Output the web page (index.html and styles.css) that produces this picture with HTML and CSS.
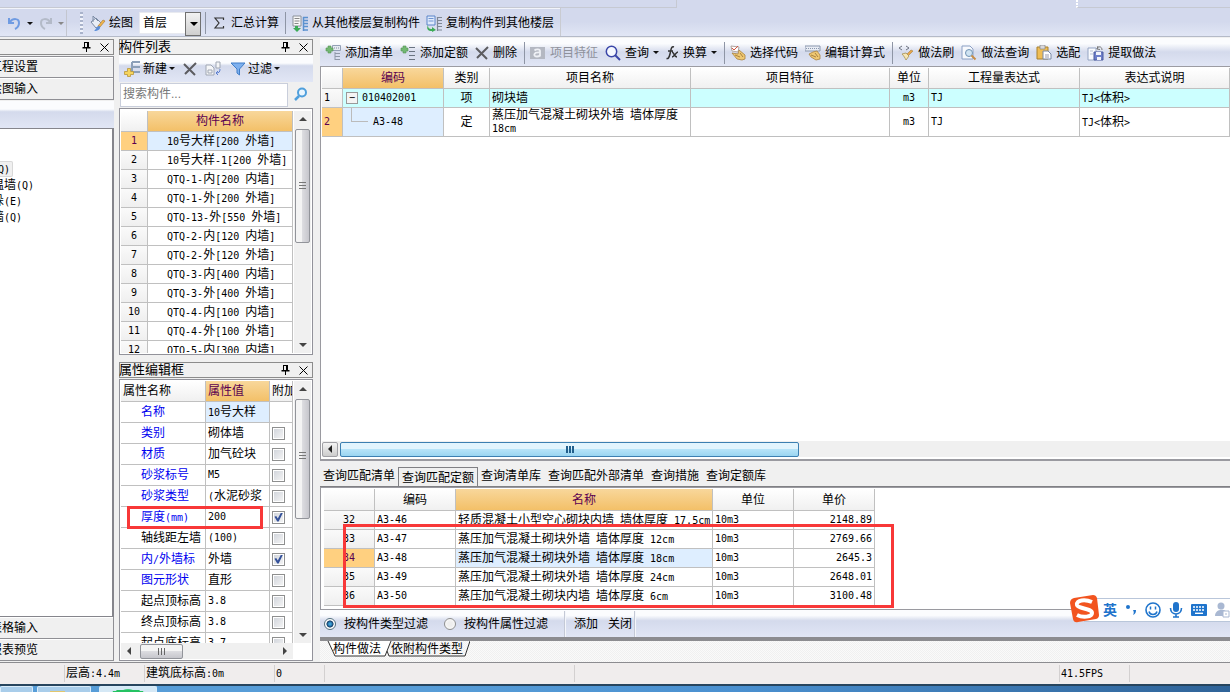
FILE: index.html
```html
<!DOCTYPE html>
<html lang="zh-CN">
<head>
<meta charset="utf-8">
<title>构件做法</title>
<link rel="stylesheet" href="styles.css">
</head>
<body>
<svg class="defs" aria-hidden="true">
  <symbol id="pin" viewBox="0 0 9 10"><path d="M2 0h5v5h1.500v1.500H5V10H4V6.500H.5V5H2zM3 1v4h2V1z" fill="#000" fill-rule="evenodd"/></symbol>
  <symbol id="close" viewBox="0 0 9 9"><path d="M.5.5l8 8M8.500.5l-8 8" stroke="#000" fill="none"/></symbol>
  <symbol id="cross" viewBox="0 0 14 14"><path d="M1 2l11 11M13 1L2 12" stroke="#5c5c60" stroke-width="2" fill="none"/></symbol>
  <symbol id="plusdoc" viewBox="0 0 16 16"><path d="M9 2.500h6M9 6.500h6M9 10.500h6M9 14.500h6" stroke="#6a7482" stroke-width="1.200"/><path d="M3 1h3v2h2v3H6v2H3V6H1V3h2z" fill="#72b872" stroke="#559455" stroke-width=".6"/></symbol>
  <symbol id="plusgrid" viewBox="0 0 16 16"><path d="M7.500.5h8v5h-8z" fill="#e6ebf2" stroke="#93a0b6"/><path d="M9 3h6" stroke="#8390a6" stroke-dasharray="1 1"/><path d="M10 7v8M10 8.500h5M10 11.500h5M10 14.500h5" stroke="#8f98a8" fill="none"/><path d="M3 1h3v2h2v3H6v2H3V6H1V3h2z" fill="#72b872" stroke="#559455" stroke-width=".6"/></symbol>
  <symbol id="copyfloor" viewBox="0 0 17 17"><path d="M1 1h8v10H1z" fill="#f8f8f8" stroke="#8b9098"/><path d="M2.500 3.500h5M2.500 6h5M2.500 8.500h4" stroke="#888"/><path d="M11.500 2v14M11 2.500h5M11 5.500h5M11 8.500h5M11 11.500h5M11 15h5" stroke="#5b91cf" stroke-width="1.500"/><path d="M3 11h3v2h3l-4 4-4-4h2z" fill="#3cab57"/></symbol>
  <symbol id="pastefloor" viewBox="0 0 17 17"><path d="M1 1h8v9H1z" fill="#dfeafc" stroke="#5b84c8"/><path d="M2.500 3.500h5M2.500 6h5" stroke="#6f94d2"/><path d="M11.500 2v14M11 2.500h5M11 5.500h5M11 8.500h5M11 11.500h5M11 15h5" stroke="#7e8794" stroke-width="1.200"/><path d="M2 10c0 3 1 4 4 4v-2l4 3-4 2v-1c-4 0-6-2-4-6z" fill="#3cab57"/></symbol>
</svg>
<div class="app">
  <header class="top">
    <div class="top-sliver"><span class="sliver-a"></span><span class="sliver-b"></span></div>
    <div class="main-tools">
      <div class="undo-group">
        <button class="tool" aria-label="撤销"><svg width="16" height="16" viewBox="0 0 16 16"><path d="M2 3v5h5M3 7c3-4 9-4 9 1 0 3-2 5-4 6" fill="none" stroke="#6f9be2" stroke-width="2"/></svg></button><i class="drop"></i>
        <button class="tool" aria-label="恢复"><svg width="16" height="16" viewBox="0 0 16 16"><path d="M13 3v5H8M12 7C9 3 3 3 3 8c0 3 2 5 4 6" fill="none" stroke="#b3bac8" stroke-width="2"/></svg></button><i class="drop dim"></i>
      </div>
      <i class="grip"></i>
      <button class="tool draw"><svg width="16" height="17" viewBox="0 0 16 17"><path d="M1 7l5-4 6 6-6 4z" fill="#e9eef6" stroke="#7c8ca5"/><path d="M3 1v6M3 1l5 5" stroke="#7c8ca5" fill="none"/><path d="M15 6l-5 6-2-1 5-6z" fill="#f2b64a" stroke="#b0803b" stroke-width=".7"/><path d="M10 11c1 3-2 5-6 5 2-1 2-5 6-5z" fill="#5b8ed8"/></svg>绘图</button>
      <span class="combo"><select aria-label="楼层"><option>首层</option></select></span>
      <i class="sep"></i>
      <button class="tool sum"><svg width="16" height="16" viewBox="0 0 16 16"><path d="M12.500 5V3H4l4 5-4 5h8.500v-2" fill="none" stroke="#333" stroke-width="1.200"/></svg>汇总计算</button>
      <i class="sep"></i>
      <button class="tool copy"><svg width="17" height="17"><use href="#copyfloor"/></svg>从其他楼层复制构件</button>
      <button class="tool copy"><svg width="17" height="17"><use href="#pastefloor"/></svg>复制构件到其他楼层</button>
    </div>
  </header>

  <main class="work">
    <aside class="nav">
      <div class="titlebar"><span></span><svg width="9" height="10"><use href="#pin"/></svg><svg width="9" height="9"><use href="#close"/></svg></div>
      <button class="fold first">工程设置</button>
      <button class="fold">绘图输入</button>
      <div class="nav-tools"></div>
      <ul class="tree">
        <li class="chosen">墙<span class="n">(Q)</span></li>
        <li>保温墙<span class="n">(Q)</span></li>
        <li>墙垛<span class="n">(E)</span></li>
        <li>幕墙<span class="n">(Q)</span></li>
      </ul>
      <button class="fold">表格输入</button>
      <button class="fold">报表预览</button>
    </aside>

    <section class="middle">
      <div class="titlebar"><span>构件列表</span><svg width="9" height="10"><use href="#pin"/></svg><svg width="9" height="9"><use href="#close"/></svg></div>
      <div class="list-tools">
        <button class="tool"><svg width="17" height="17" viewBox="0 0 17 17"><path d="M8 2h8M8 7h8M8 12h8M8 2v10" stroke="#8da0b8" stroke-width="2" fill="none"/><path d="M3.500 8.500h3v3h3v3h-3v2h-3v-2h-3v-3h3z" fill="#f6d45c" stroke="#b8953a" stroke-width=".8"/></svg>新建<i class="drop"></i></button>
        <button class="tool" aria-label="删除"><svg width="14" height="14"><use href="#cross"/></svg></button>
        <button class="tool" aria-label="复制"><svg width="17" height="16" viewBox="0 0 17 16"><path d="M1 4h5l3 3v7H1zM11 1h4v6h-4z" fill="#f5f6f8" stroke="#a0a7b3"/><path d="M3 9h4v3H3z" fill="none" stroke="#a0a7b3"/><path d="M15 8c0 3-1 4-4 4M13 10l-2 2 2 2" fill="none" stroke="#5c7fd0"/></svg></button>
        <button class="tool"><svg width="16" height="16" viewBox="0 0 16 16"><path d="M1 2h14l-5.500 6v6L7 12V8z" fill="#7eb0ee" stroke="#3f7dc8"/></svg>过滤<i class="drop"></i></button>
      </div>
      <div class="search">
        <input type="text" placeholder="搜索构件..." aria-label="搜索构件">
        <button class="tool" aria-label="搜索"><svg width="14" height="14" viewBox="0 0 14 14"><circle cx="8" cy="5.500" r="4" fill="#eaf6ff" stroke="#4f9fdc" stroke-width="2"/><path d="M5 9l-4 4" stroke="#4f9fdc" stroke-width="2.500"/></svg></button>
      </div>
      <div class="frame list-frame">
        <div class="clip">
          <table class="grid list">
            <colgroup><col class="w27"><col></colgroup>
            <thead><tr><th></th><th class="hot">构件名称</th></tr></thead>
            <tbody>
              <tr class="on"><th class="n">1</th><td><span class="n">10</span>号大样<span class="n">[200 </span>外墙<span class="n">]</span></td></tr>
              <tr><th class="n">2</th><td><span class="n">10</span>号大样<span class="n">-1[200 </span>外墙<span class="n">]</span></td></tr>
              <tr><th class="n">3</th><td><span class="n">QTQ-1-</span>内<span class="n">[200 </span>内墙<span class="n">]</span></td></tr>
              <tr><th class="n">4</th><td><span class="n">QTQ-1-</span>外<span class="n">[200 </span>外墙<span class="n">]</span></td></tr>
              <tr><th class="n">5</th><td><span class="n">QTQ-13-</span>外<span class="n">[550 </span>外墙<span class="n">]</span></td></tr>
              <tr><th class="n">6</th><td><span class="n">QTQ-2-</span>内<span class="n">[120 </span>内墙<span class="n">]</span></td></tr>
              <tr><th class="n">7</th><td><span class="n">QTQ-2-</span>外<span class="n">[120 </span>外墙<span class="n">]</span></td></tr>
              <tr><th class="n">8</th><td><span class="n">QTQ-3-</span>内<span class="n">[400 </span>内墙<span class="n">]</span></td></tr>
              <tr><th class="n">9</th><td><span class="n">QTQ-3-</span>外<span class="n">[400 </span>外墙<span class="n">]</span></td></tr>
              <tr><th class="n">10</th><td><span class="n">QTQ-4-</span>内<span class="n">[100 </span>内墙<span class="n">]</span></td></tr>
              <tr><th class="n">11</th><td><span class="n">QTQ-4-</span>外<span class="n">[100 </span>外墙<span class="n">]</span></td></tr>
              <tr><th class="n">12</th><td><span class="n">QTQ-5-</span>内<span class="n">[300 </span>内墙<span class="n">]</span></td></tr>
            </tbody>
          </table>
        </div>
        <div class="vbar"><i class="up"></i><b class="thumb tall"></b><i class="down"></i></div>
      </div>

      <div class="titlebar second"><span>属性编辑框</span><svg width="9" height="10"><use href="#pin"/></svg><svg width="9" height="9"><use href="#close"/></svg></div>
      <div class="frame prop-frame">
        <div class="clip">
          <table class="grid props">
            <colgroup><col><col class="w64"><col class="w23"></colgroup>
            <thead><tr><th>属性名称</th><th class="hot">属性值</th><th>附加</th></tr></thead>
            <tbody>
              <tr class="on"><td class="key">名称</td><td><span class="n">10</span>号大样</td><td></td></tr>
              <tr><td class="key">类别</td><td>砌体墙</td><td><input type="checkbox" aria-label="类别附加"></td></tr>
              <tr><td class="key">材质</td><td>加气砼块</td><td><input type="checkbox" aria-label="材质附加"></td></tr>
              <tr><td class="key">砂浆标号</td><td class="n">M5</td><td><input type="checkbox" aria-label="砂浆标号附加"></td></tr>
              <tr><td class="key">砂浆类型</td><td><span class="n">(</span>水泥砂浆</td><td><input type="checkbox" aria-label="砂浆类型附加"></td></tr>
              <tr><td class="key">厚度<span class="n">(mm)</span></td><td class="n">200</td><td><input type="checkbox" checked aria-label="厚度附加"></td></tr>
              <tr><td class="key plain">轴线距左墙</td><td class="n">(100)</td><td><input type="checkbox" aria-label="轴线距附加"></td></tr>
              <tr><td class="key">内<span class="n">/</span>外墙标</td><td>外墙</td><td><input type="checkbox" checked aria-label="内外墙附加"></td></tr>
              <tr><td class="key">图元形状</td><td>直形</td><td><input type="checkbox" aria-label="图元形状附加"></td></tr>
              <tr><td class="key plain">起点顶标高</td><td class="n">3.8</td><td><input type="checkbox" aria-label="起点顶标高附加"></td></tr>
              <tr><td class="key plain">终点顶标高</td><td class="n">3.8</td><td><input type="checkbox" aria-label="终点顶标高附加"></td></tr>
              <tr><td class="key plain">起点底标高</td><td class="n">3.7</td><td><input type="checkbox" aria-label="起点底标高附加"></td></tr>
            </tbody>
          </table>
        </div>
        <div class="vbar"><i class="up"></i><b class="thumb tall"></b><i class="down"></i></div>
        <div class="hbar"><i class="left"></i><b class="thumb wide"></b><i class="right-end"></i></div>
        <div class="mark mark-thickness"></div>
      </div>
    </section>

    <section class="right">
      <div class="def-tools">
        <button class="tool"><svg width="16" height="16"><use href="#plusgrid"/></svg>添加清单</button>
        <button class="tool"><svg width="16" height="16"><use href="#plusdoc"/></svg>添加定额</button>
        <button class="tool"><svg width="14" height="14"><use href="#cross"/></svg>删除</button>
        <i class="sep"></i>
        <button class="tool off"><svg width="16" height="14" viewBox="0 0 16 14"><path d="M0 1h15v12H0z" fill="#b4b8c2"/><path d="M4.500 4.500C6 3 10 3 10 5v5.500M10 6.500c-7-.5-7 4-3 4 2 0 3-1 3-2" fill="none" stroke="#eef0f5" stroke-width="1.800"/></svg>项目特征</button>
        <button class="tool"><svg width="16" height="16" viewBox="0 0 16 16"><circle cx="6.500" cy="6.500" r="5.200" fill="#f5f8ff" stroke="#3a46a8" stroke-width="1.500"/><path d="M10 10l5 5" stroke="#3a46a8" stroke-width="2"/></svg>查询<i class="drop"></i></button>
        <button class="tool"><svg width="13" height="14" viewBox="0 0 13 14"><path d="M8 1C5 0 5 4 4 8s-2 5-3.500 4.500M2 5h5M6 6c2 0 2 5 5 5M12 6c-2 0-4 5-6 5" fill="none" stroke="#333" stroke-width="1.500"/></svg>换算<i class="drop"></i></button>
        <i class="sep"></i>
        <button class="tool"><svg width="16" height="16" viewBox="0 0 16 16"><path d="M1 1l8 1-1 5-6-1z" fill="#fff" stroke="#b3a6a0"/><path d="M2 3l2 2 4-4" stroke="#d45644" fill="none"/><path d="M2 8l6 1 1-4 6 5v4l-3 1-5-1z" fill="#efc873" stroke="#a9823f" stroke-width=".8"/><path d="M5 10l5 2M10 8l3 4" stroke="#a9823f"/></svg>选择代码</button>
        <button class="tool"><svg width="16" height="16" viewBox="0 0 16 16"><path d="M0 1h15v5H0z" fill="#e8ecf4" stroke="#8996ad"/><path d="M1 3.500h13" stroke="#8996ad" stroke-dasharray="1 1"/><path d="M4 9l4-2 4-1 3 4v4l-4 1-5-3z" fill="#efc873" stroke="#a9823f" stroke-width=".8"/><path d="M6 10l5 2M10 8l3 4" stroke="#a9823f"/></svg>编辑计算式</button>
        <i class="sep"></i>
        <button class="tool"><svg width="16" height="16" viewBox="0 0 16 16"><path d="M4 1L1 3l3 2M8 1l3 2-3 2" fill="none" stroke="#6d7380"/><path d="M15 6l-5 5-2-1 5-5z" fill="#e8a54a" stroke="#a9823f" stroke-width=".6"/><path d="M4 9l4-1 3 3-3 4c-1-2-2-4-4-6z" fill="#f6e6b4" stroke="#a39053" stroke-width=".8"/></svg>做法刷</button>
        <button class="tool"><svg width="16" height="16" viewBox="0 0 16 16"><path d="M1 1h8l3 3v10H1z" fill="#f7f9fd" stroke="#8ba0c4"/><circle cx="8" cy="8" r="3.500" fill="#cfe3f2" stroke="#7193b4"/><path d="M10.500 10.500l4 4" stroke="#c78d48" stroke-width="2"/></svg>做法查询</button>
        <button class="tool"><svg width="16" height="16" viewBox="0 0 16 16"><path d="M1 2h11v12H1z" fill="#efbd55" stroke="#a8802c"/><path d="M4 0h5v4H4z" fill="#d8d8dc" stroke="#888" stroke-width=".7"/><path d="M7 6h5l3 3v5H7z" fill="#fff" stroke="#7888a4"/><path d="M9 10h4M9 12h4" stroke="#99a"/></svg>选配</button>
        <button class="tool"><svg width="17" height="16" viewBox="0 0 17 16"><path d="M1 3h8v12H1z" fill="#f8fafe" stroke="#94a4c2"/><path d="M3 6h3M3 9h3" stroke="#b8c2d5"/><path d="M7 7h9v8H7z" fill="#6d7fca" stroke="#4a5aa0"/><path d="M9 7h5v3H9zM10 12h4v3h-4z" fill="#f2f4fb"/><path d="M10 4c1-3 5-3 5 1M11 1l-1 3 3 .5" fill="none" stroke="#777"/></svg>提取做法</button>
      </div>
      <div class="def-area">
        <div class="def-sheet">
          <table class="grid defs-table">
            <colgroup><col class="w21"><col class="w101"><col class="w46"><col class="w201"><col class="w199"><col class="w39"><col class="w151"><col></colgroup>
            <thead><tr><th></th><th class="hot">编码</th><th>类别</th><th>项目名称</th><th>项目特征</th><th>单位</th><th>工程量表达式</th><th>表达式说明</th></tr></thead>
            <tbody>
              <tr class="item"><th class="n">1</th><td class="n code"><button class="toggle" aria-label="折叠">−</button>010402001</td><td class="mid">项</td><td>砌块墙</td><td></td><td class="n mid">m3</td><td class="n">TJ</td><td><span class="n">TJ&lt;</span>体积<span class="n">&gt;</span></td></tr>
              <tr class="sub on"><th class="n">2</th><td class="n child"><i class="branch"></i>A3-48</td><td class="mid">定</td><td class="wrap">蒸压加气混凝土砌块外墙<span class="n"> </span>墙体厚度<br><span class="n">18cm</span></td><td></td><td class="n mid">m3</td><td class="n">TJ</td><td><span class="n">TJ&lt;</span>体积<span class="n">&gt;</span></td></tr>
            </tbody>
          </table>
        </div>
        <div class="hbar blue"><i class="left"></i><b class="thumb"></b></div>
      </div>

      <nav class="tabs">
        <button>查询匹配清单</button><button class="active">查询匹配定额</button><button>查询清单库</button><button>查询匹配外部清单</button><button>查询措施</button><button>查询定额库</button>
      </nav>
      <div class="query-area">
        <table class="grid query">
          <colgroup><col class="w51"><col class="w81"><col class="w257"><col class="w81"><col class="w81"></colgroup>
          <thead><tr><th></th><th>编码</th><th class="hot">名称</th><th>单位</th><th>单价</th></tr></thead>
          <tbody>
            <tr><th class="n">32</th><td class="n">A3-46</td><td>轻质混凝土小型空心砌块内墙<span class="n"> </span>墙体厚度<span class="n"> 17.5cm</span></td><td class="n">10m3</td><td class="n num">2148.89</td></tr>
            <tr><th class="n">33</th><td class="n">A3-47</td><td>蒸压加气混凝土砌块外墙<span class="n"> </span>墙体厚度<span class="n"> 12cm</span></td><td class="n">10m3</td><td class="n num">2769.66</td></tr>
            <tr class="on"><th class="n">34</th><td class="n">A3-48</td><td class="cur">蒸压加气混凝土砌块外墙<span class="n"> </span>墙体厚度<span class="n"> 18cm</span></td><td class="n">10m3</td><td class="n num">2645.3</td></tr>
            <tr><th class="n">35</th><td class="n">A3-49</td><td>蒸压加气混凝土砌块外墙<span class="n"> </span>墙体厚度<span class="n"> 24cm</span></td><td class="n">10m3</td><td class="n num">2648.01</td></tr>
            <tr><th class="n">36</th><td class="n">A3-50</td><td>蒸压加气混凝土砌块内墙<span class="n"> </span>墙体厚度<span class="n"> 6cm</span></td><td class="n">10m3</td><td class="n num">3100.48</td></tr>
          </tbody>
        </table>
        <div class="mark mark-rows"></div>
      </div>
      <div class="filter-bar">
        <label><input type="radio" name="filter" checked>按构件类型过滤</label>
        <label><input type="radio" name="filter">按构件属性过滤</label>
        <i class="edge"></i>
        <button class="tool">添加</button><button class="tool">关闭</button>
        <i class="edge"></i>
      </div>
      <div class="sheet-tabs">
        <svg class="tab-lines" width="150" height="18" viewBox="0 0 150 18"><path d="M9 0l6 15h50l6-15z" fill="#fff"/><path d="M8 0l7 15h50l6-15M67 10l2 5h76l5-15" fill="none" stroke="#333"/></svg>
        <button>构件做法</button><button>依附构件类型</button>
      </div>
    </section>
  </main>

  <footer class="status">
    <span class="s1"></span><span class="s2">层高<span class="n">:4.4m</span></span><span class="s3">建筑底标高<span class="n">:0m</span></span><span class="s4 n">0</span><span class="s5"></span><span class="s6"></span><span class="s7 n">41.5FPS</span><span></span>
  </footer>
  <div class="taskbar"><i class="t1"></i><i class="t2"></i><i class="t3"></i></div>

  <div class="ime">
    <svg class="sogou" width="30" height="30" viewBox="0 0 30 30"><path d="M5 4L24 1q3 0 4 3l2 17q0 3-3 4L9 28q-4 1-5-3L1 9Q1 5 5 4z" fill="#f2541f"/><path d="M23 8C16 5 7 6 8 11c1 4 15 3 15 8 0 4-9 5-15 2" fill="none" stroke="#fff" stroke-width="4"/></svg>
    <button class="lang">英</button>
    <svg width="12" height="12" viewBox="0 0 12 12"><circle cx="3" cy="3" r="2" fill="#1f74cc"/><path d="M8 6h3c0 3-1 4-3 5 1-2 1-3 0-5z" fill="#1f74cc"/></svg>
    <svg width="16" height="16" viewBox="0 0 16 16"><circle cx="8" cy="8" r="7" fill="none" stroke="#1f74cc" stroke-width="1.600"/><path d="M5.500 4.500v3M10.500 4.500v3M4 9.500c1 4 7 4 8 0" fill="none" stroke="#1f74cc" stroke-width="1.500"/></svg>
    <svg width="14" height="16" viewBox="0 0 14 16"><rect x="4" y="0" width="6" height="10" rx="3" fill="#1f74cc"/><path d="M1.500 6c0 8 11 8 11 0M7 12v3M4 15h6" fill="none" stroke="#1f74cc" stroke-width="1.600"/></svg>
    <svg width="16" height="12" viewBox="0 0 16 12"><rect width="16" height="12" rx="1" fill="#1f74cc"/><path d="M2 3h12M2 6h12" stroke="#fff" stroke-width="1.400" stroke-dasharray="2 1"/><path d="M4 9.300h8" stroke="#fff" stroke-width="1.400"/></svg>
    <svg width="15" height="16" viewBox="0 0 15 16"><circle cx="6" cy="4" r="3.500" fill="#a9b8d2"/><path d="M0 14c0-8 12-8 12-2v2z" fill="#a9b8d2"/><path d="M8 9h6v6H8z" fill="#fff" stroke="#a9b8d2"/><path d="M10 12h2" stroke="#a9b8d2"/></svg>
  </div>
</div>
</body>
</html>
```
FILE: styles.css
```css
* { box-sizing: border-box; }
body {
  margin: 0;
  background: #f0f0f0;
  color: #000;
  font: 12px/16px "Liberation Sans", "Noto Sans CJK SC", sans-serif;
}
button, input, select { font: inherit; color: inherit; }
button { border: 0; background: none; padding: 0; white-space: nowrap; }
svg { flex: none; }
.defs { position: absolute; width: 0; height: 0; }
.n { font-family: "DejaVu Sans Mono", monospace; font-size: 10px; white-space: pre; }
.app { position: relative; display: flex; flex-direction: column; height: 100vh; overflow: hidden; }

/* Top toolbars */
.top { height: 37px; background: linear-gradient(#d3d9ed 60%, #e1e6f5); border-bottom: 1px solid #b4bac8; }
.top-sliver { display: flex; justify-content: space-between; height: 8px; }
.sliver-a { width: 677px; height: 8px; border: solid #c6c9d2; border-width: 0 1px 1px 0; }
.sliver-b { width: 154px; height: 8px; border: solid #c6c9d2; border-width: 0 0 1px; border-left: 2px dotted #fff; }
.main-tools {
  display: flex; align-items: center; width: 561px; height: 28px; padding-top: 2px;
  border-right: 1px solid #c9cbd1; box-shadow: inset 0 1px #f2f4fa;
}
.undo-group { display: flex; align-items: center; gap: 5px; width: 67px; height: 26px; padding-left: 7px; border-right: 1px solid #c3c6cf; }
.undo-group .drop { margin-left: 0; }
.undo-group .tool { margin-right: -1px; }
.grip { width: 3px; height: 22px; margin: 0 7px 0 13px; background: repeating-linear-gradient(#a9b3cb 0 2px, #f0f3fb 2px 4px); }
.tool { display: flex; align-items: center; gap: 4px; flex: none; height: 22px; }
.drop { flex: none; border: 3px solid transparent; border-top-color: #111; border-bottom: 0; }
.drop.dim { border-top-color: #888; }
.sep { flex: none; width: 1px; height: 22px; background: #8e95a5; }
.draw { width: 49px; gap: 3px; }
.combo { position: relative; flex: none; width: 62px; height: 22px; margin-right: 4px; }
.combo select { appearance: none; width: 100%; height: 100%; padding: 0 3px; border: 1px solid #e8eaf0; border-radius: 0; background: #fff; }
.combo::before { content: ""; position: absolute; right: 0; top: 0; width: 14px; height: 22px; border: 1px solid #707070; background: linear-gradient(#f2f2f2, #cfcfcf); pointer-events: none; }
.combo::after { content: ""; position: absolute; right: 3px; top: 10px; border: 4px solid transparent; border-top-color: #000; border-bottom: 0; pointer-events: none; }
.sum { margin: 0 6px 0 5px; }
.copy { margin-left: 6px; gap: 3px; }

/* Columns */
.work { flex: 1; min-height: 0; display: grid; grid-template-columns: 114px 194px 1fr; column-gap: 5px; }
.nav, .middle, .right { display: flex; flex-direction: column; min-height: 0; min-width: 0; }
.nav, .middle { padding-top: 2px; padding-bottom: 1px; }
.right { padding-top: 1px; margin-left: 2px; }

.titlebar { flex: none; display: flex; align-items: center; gap: 9px; height: 16px; padding-right: 4px; border: 1px solid #8c8c8c; line-height: 14px; }
.titlebar span { flex: 1; font-size: 13px; margin-left: -1px; }
.nav .titlebar { border-left: 0; margin-bottom: 1px; }
.fold { flex: none; height: 22px; text-align: left; text-indent: -10px; overflow: hidden; border: solid #8f8f94; border-width: 0 1px 1px 0; box-shadow: inset 0 1px #fff; }
.fold.first { border-top-width: 1px; }
.nav-tools { flex: none; height: 27px; margin-top: 1px; background: linear-gradient(#fbfcfe 0 30%, #d4daec 40%, #e1e6f5); }
.tree { flex: 1; margin: 0; padding: 32px 0 0; list-style: none; background: #fff; border: solid #85858c; border-width: 1px 2px 1px 0; overflow: hidden; }
.tree li { height: 16px; width: max-content; margin-left: -20px; }
.tree .chosen { background: #f0f0f0; padding-right: 3px; box-shadow: inset 0 0 0 1px #d8d8d8; border-radius: 2px; }

/* Tables */
.grid { border-collapse: separate; border-spacing: 0; table-layout: fixed; width: 100%; }
.grid th, .grid td { height: 19px; padding: 0 2px; border: solid #c0c0c0; border-width: 0 1px 1px 0; font-weight: normal; line-height: 14px; white-space: pre; overflow: hidden; text-align: left; background: #fff; }
.grid thead th { height: 21px; text-align: center; background: linear-gradient(#fff, #f0f0f0); }
.grid thead .hot { color: #5a0050; background: linear-gradient(#f8d79b, #f3c068); }
.grid tbody th { text-align: center; background: linear-gradient(#fafafa, #efefef); }
.grid tbody .on th { background: #ffd080; color: #5a0050; }
.grid .mid { text-align: center; }
.grid .num { text-align: right; }
.w21 { width: 21px; } .w23 { width: 23px; } .w27 { width: 27px; } .w39 { width: 39px; }
.w46 { width: 46px; } .w51 { width: 51px; } .w64 { width: 64px; } .w81 { width: 81px; }
.w101 { width: 101px; } .w151 { width: 151px; } .w199 { width: 199px; } .w201 { width: 201px; } .w257 { width: 257px; }

/* Component list */
.list-tools { flex: none; display: flex; align-items: center; gap: 8px; height: 27px; padding-left: 5px; background: linear-gradient(#fbfcfe 0 30%, #d4daec 40%, #e1e6f5); }
.list-tools .tool { gap: 2px; }
.search { flex: none; display: flex; gap: 6px; height: 24px; margin: 1px 0; }
.search input { width: 168px; height: 24px; margin-left: 1px; padding: 0 2px 3px; border: 1px solid #c9cedb; background: #fff; outline: 0; }
.search input::placeholder { color: #777; opacity: 1; }
.frame { position: relative; display: grid; grid-template-columns: 1fr 18px; min-height: 0; padding: 2px 1px 1px; border: 1px solid #92929a; background: #fff; }
.clip { overflow: hidden; min-height: 0; }
.list-frame { flex: 0 0 247px; }
.list td { padding-left: 19px; }
.list .on td, .props .on td:nth-child(2) { background: #deeeff; }
.second { margin-top: 7px; margin-bottom: 1px; }
.prop-frame { flex: 1; padding: 1px; grid-template-rows: minmax(0, 1fr) 16px; }
.props th, .props td { height: 21px; }
.props thead th { text-align: left; }
.props .key { padding-left: 20px; color: #0000f0; }
.props .plain { color: #000; }
.props input { appearance: none; display: block; position: relative; width: 13px; height: 13px; margin: 0; border: 1px solid #8e8f8f; background: linear-gradient(135deg, #cfd3da, #f6f6f6); box-shadow: inset 0 0 0 1px #fff; }
.props input:checked::after { content: ""; position: absolute; inset: 1px; background: #35529a; clip-path: polygon(5% 48%, 25% 40%, 42% 68%, 78% 0, 100% 0, 52% 100%, 36% 100%); }

/* Scroll bars */
.vbar, .hbar { display: flex; align-items: center; background: #f0f0f0; }
.vbar { flex-direction: column; padding: 6px 0; margin-left: 1px; }
.hbar { height: 16px; padding: 0 6px; }
.up, .down, .left, .right-end { flex: none; border: 4px solid transparent; }
.up { border-bottom-color: #444; border-top: 0; }
.down { border-top-color: #444; border-bottom: 0; margin-top: auto; }
.left { border-right-color: #444; border-left: 0; }
.right-end { border-left-color: #444; border-right: 0; margin-left: auto; }
.thumb { display: block; border: 1px solid #92949a; border-radius: 2px; }
.tall { width: 15px; margin-top: 8px; background: linear-gradient(#777, #777) center 52px / 7px 1px no-repeat, linear-gradient(#777, #777) center 55px / 7px 1px no-repeat, linear-gradient(#777, #777) center 58px / 7px 1px no-repeat, linear-gradient(90deg, #f4f4f4 0 45%, #dcdce0 50%, #c6c6cc); }
.list-frame .tall { height: 114px; }
.prop-frame .tall { height: 120px; }
.wide { width: 43px; height: 15px; margin-left: 9px; background: linear-gradient(#666, #666) 17px center / 1px 7px no-repeat, linear-gradient(#666, #666) 20px center / 1px 7px no-repeat, linear-gradient(#666, #666) 23px center / 1px 7px no-repeat, linear-gradient(#f4f4f4 0 45%, #dcdce0 50%, #c6c6cc); }
.blue { flex: none; padding: 0; }
.blue .left { width: 16px; height: 15px; border: 1px solid #a0a0a5; border-radius: 2px; background: linear-gradient(#f4f4f4, #ccc); display: grid; place-items: center; }
.blue .left::before { content: ""; border: 4px solid transparent; border-right-color: #222; border-left: 0; }
.blue .thumb { width: 459px; height: 15px; margin-left: 2px; border-color: #3c7fb1; background: repeating-linear-gradient(90deg, #225f8c 0 2px, transparent 2px 3px) center / 8px 7px no-repeat, linear-gradient(#e2f4fd 0 45%, #b6e3f8 50%, #9ad5f1); }

/* Red callouts over the grids */
.mark { position: absolute; border: 3px solid #f83838; pointer-events: none; }
.mark-thickness { left: 7px; top: 126px; width: 136px; height: 23px; }
.mark-rows { left: 22px; top: 36px; width: 551px; height: 84px; }

/* Definition grid */
.def-tools { flex: none; display: flex; align-items: center; height: 29px; padding: 1px 0 0 5px; gap: 7px; background: linear-gradient(#fbfcfe 0 20%, #d4daec 50%, #e1e6f5); border-bottom: 1px solid #9c9ca2; overflow: hidden; }
.def-tools .sep { margin: 0 -2px 0 0; }
.off { color: #8e919b; }
.def-area { flex: 1; min-height: 0; display: flex; flex-direction: column; padding: 1px 0 2px 1px; border: solid #9a9aa0; border-width: 0 0 2px 1px; background: #fff; }
.def-sheet { flex: 1; overflow: hidden; }
.defs-table tbody th { text-align: left; }
.defs-table .item td { background: #ccffff; }
.defs-table .sub td { height: 29px; }
.defs-table .sub td.child { background: #deeeff; position: relative; padding-left: 30px; }
.defs-table td.wrap { line-height: 12px; }
.toggle { width: 12px; height: 12px; margin: 0 4px 0 1px; border: 1px solid #999; background: #f4f4f4; line-height: 10px; vertical-align: middle; }
.branch { position: absolute; left: 8px; top: 0; width: 17px; height: 14px; border: solid #bbb; border-width: 0 0 1px 1px; }

/* Query area */
.tabs { flex: none; display: flex; align-items: flex-start; gap: 7px; height: 26px; padding: 6px 0 0 3px; border-bottom: 1px solid #808084; }
.tabs button { height: 18px; }
.tabs .active { height: 19px; margin: 0 -4px; padding: 3px 3px 0; border: 1px solid #808084; border-bottom: 0; line-height: 15px; }
.query-area { flex: none; position: relative; height: 123px; padding: 1px 0 0 3px; background: #fff; border: solid #9a9aa0; border-width: 1px 0 1px 1px; }
.query { width: 551px; }
.query thead th { height: 22px; }
.query .cur { background: #deeeff; }
.filter-bar { flex: none; display: flex; align-items: center; gap: 8px; height: 27px; padding: 1px 0 0 4px; background: linear-gradient(#fbfcfe 0 20%, #d4daec 40%, #e1e6f5); }
.filter-bar label { display: flex; align-items: center; gap: 8px; margin-right: 8px; }
.filter-bar .tool { margin-right: 2px; }
.filter-bar .tool + .edge { margin-left: -8px; }
.filter-bar input { appearance: none; width: 12px; height: 12px; margin: 0; border: 1px solid #8e8f8f; border-radius: 50%; background: radial-gradient(#eee 30%, #fff); }
.filter-bar input:checked { background: radial-gradient(#3ba0d8 15%, #123a66 45%, #fff 55%); border-color: #53707f; }
.edge { width: 2px; height: 26px; background: #c4c9d6; border-right: 1px solid #f4f6fb; }
.sheet-tabs { flex: none; position: relative; display: flex; gap: 10px; height: 25px; padding: 1px 0 0 13px; border-top: 4px solid #8c8c90; background: repeating-conic-gradient(#f0f0f0 0 25%, #fafafa 0 50%) 0 0 / 2px 2px; }
.tab-lines { position: absolute; left: 0; top: 0; }
.sheet-tabs button { position: relative; height: 14px; line-height: 14px; }

/* Status bar and task bar */
.status { flex: none; display: flex; height: 22px; padding: 2px 0; background: #f0eded; border-top: 1px solid #8c8c90; line-height: 17px; }
.status > span { border-right: 1px solid #d3d0d0; padding-left: 1px; }
.status > span.n { line-height: 18px; }
.status .s1 { width: 65px; } .status .s2 { width: 80px; } .status .s3 { width: 130px; }
.status .s4 { width: 50px; } .status .s5 { width: 250px; } .status .s6 { flex: 1; }
.status .s7 { width: 70px; } .status > span:last-child { width: 100px; border: 0; }
.taskbar { flex: none; display: flex; height: 8px; border-top: 2px solid #27455e; background: linear-gradient(90deg, #579dd8 0 35%, #4a90d0 60%, #2f6398); overflow: hidden; }
.taskbar i { height: 8px; background: #a9cdea; border: 1px solid #d9ecfa; border-bottom: 0; border-radius: 2px 2px 0 0; margin-right: 4px; }
.t1 { width: 33px; }
.taskbar .t2 { width: 54px; margin-right: 8px; background: linear-gradient(#e2c66d, #e2c66d) 12px 4px / 15px 4px no-repeat, #a9cdea; }
.taskbar .t3 { width: 58px; background: radial-gradient(ellipse at 50% 100%, #25c262 0 45%, transparent 47%), #d5e8f5; }

/* Floating input-method bar */
.ime { position: absolute; right: 0; bottom: 70px; display: flex; align-items: center; gap: 8px; width: 146px; height: 24px; padding-left: 19px; border: solid #b9c6da; border-width: 1px 0; background: #fff; }
.sogou { position: absolute; left: -15px; top: -5px; }
.lang { color: #1f74cc; font-size: 14px; font-weight: bold; }
```
